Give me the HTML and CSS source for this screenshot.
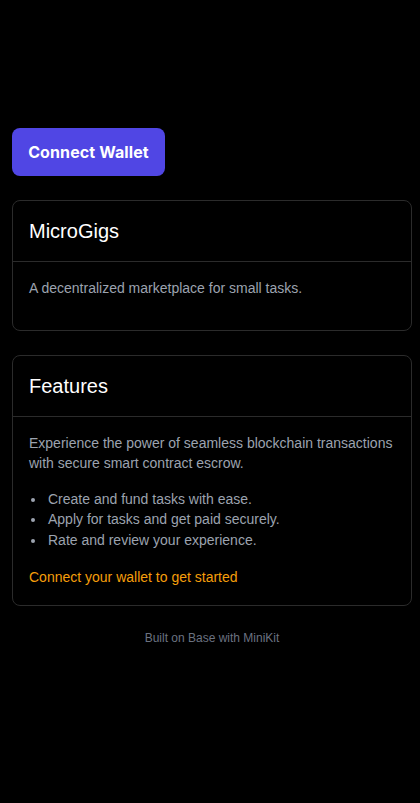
FILE: index.html
```html
<!DOCTYPE html>
<html>
<head>
<meta charset="utf-8">
<link rel="stylesheet" href="styles.css">
</head>
<body>
<main class="page">
  <button class="connect-btn">Connect Wallet</button>
  <section class="card">
    <div class="card-header"><h2 class="card-title">MicroGigs</h2></div>
    <div class="card-body card-body-intro">
      <p class="muted">A decentralized marketplace for small tasks.</p>
    </div>
  </section>
  <section class="card">
    <div class="card-header"><h2 class="card-title">Features</h2></div>
    <div class="card-body card-body-features">
      <p class="muted">Experience the power of seamless blockchain transactions with secure smart contract escrow.</p>
      <ul class="features">
        <li>Create and fund tasks with ease.</li>
        <li>Apply for tasks and get paid securely.</li>
        <li>Rate and review your experience.</li>
      </ul>
      <p class="cta">Connect your wallet to get started</p>
    </div>
  </section>
  <footer class="footer">Built on Base with MiniKit</footer>
</main>
</body>
</html>
```
FILE: styles.css
```css
* { box-sizing: border-box; }
html, body { margin: 0; background: #000; }
body { font-family: "Liberation Sans", Arial, sans-serif; color: #fff; }
.page {
  width: 400px;
  margin-left: 12px;
  padding-top: 128px;
  display: flex;
  flex-direction: column;
  align-items: flex-start;
  gap: 24px;
}
.connect-btn {
  font-family: Inter, sans-serif;
  font-weight: 700;
  font-size: 16px;
  letter-spacing: 0.1px;
  color: #fff;
  background: #5046e4;
  border: none;
  border-radius: 8px;
  height: 48px;
  padding: 0 16px;
  width: 153px;
}
.card {
  width: 100%;
  border: 1px solid #2b2b2b;
  border-radius: 8px;
}
.card-header {
  padding: 16px;
  border-bottom: 1px solid #2b2b2b;
}
.card-title {
  margin: 0;
  font-size: 20px;
  line-height: 28px;
  font-weight: 400;
}
.card-body { padding: 16px; }
.card-body-intro { padding-bottom: 31px; }
.card-body-features { padding-bottom: 18px; }
.muted {
  margin: 0;
  font-size: 14px;
  line-height: 20.5px;
  color: #9ca3af;
}
.features {
  list-style: none;
  margin: 15px 0 0;
  padding-left: 19px;
  font-size: 14px;
  line-height: 20.5px;
  color: #9ca3af;
}
.features li { position: relative; }
.features li::before {
  content: "";
  position: absolute;
  left: -17px;
  top: 9px;
  width: 4px;
  height: 4px;
  border-radius: 50%;
  background: #9ca3af;
}
.cta {
  margin: 17px 0 0;
  font-size: 14px;
  line-height: 20px;
  color: #f59e0b;
}
.footer {
  align-self: center;
  font-size: 12px;
  line-height: 16px;
  color: #6b7280;
  margin-top: 0;
}
```
